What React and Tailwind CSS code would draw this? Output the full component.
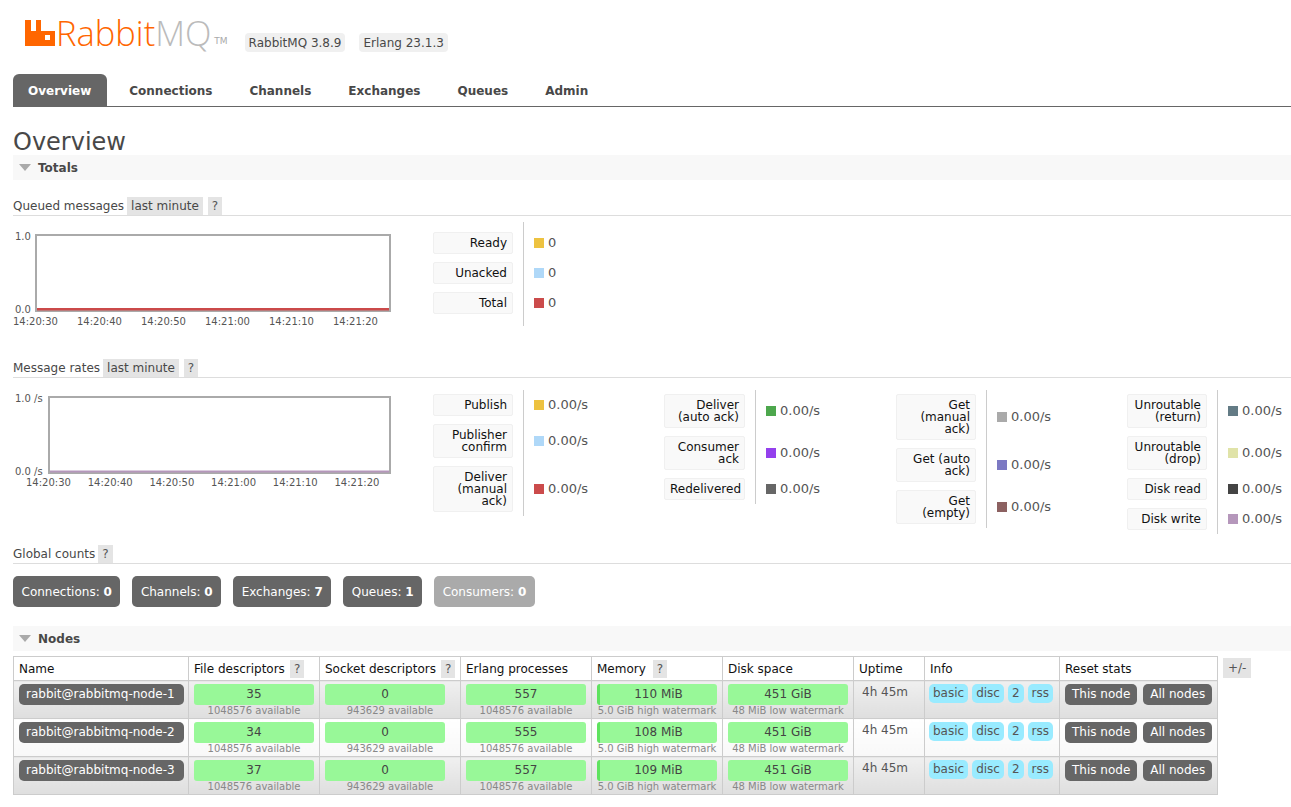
const FONT = '"DejaVu Sans", Verdana, sans-serif'

const nodes = [
  { name: 'rabbit@rabbitmq-node-1', fd: 35, proc: 557, mem: '110 MiB', odd: true },
  { name: 'rabbit@rabbitmq-node-2', fd: 34, proc: 555, mem: '108 MiB', odd: false },
  { name: 'rabbit@rabbitmq-node-3', fd: 37, proc: 557, mem: '109 MiB', odd: true },
]

function Help() {
  return <span className="inline-block h-[18px] bg-[#e4e4e4] px-[4px] leading-[18px] text-[#555]">?</span>
}

function SectionBar({ title }) {
  return (
    <div className="flex h-[25px] items-center bg-[#f8f8f8] pl-[6px]">
      <span className="h-0 w-0 border-x-[6px] border-t-[7px] border-x-transparent border-t-[#aaa]" />
      <span className="ml-[7px] pt-[1px] text-[12px] font-bold text-[#484848]">{title}</span>
    </div>
  )
}

function SubHead({ title, range }) {
  return (
    <div className="flex h-[20px] items-end gap-[5px] border-b border-[#ddd] text-[#484848]">
      <span className="mr-[-2px] leading-[18px]">{title}</span>
      {range && <span className="h-[18px] bg-[#e4e4e4] px-[4px] leading-[18px]">{range}</span>}
      <Help />
    </div>
  )
}

function Chart({ frameX, labels, top, bottom, startX, labelY, step, width, line, lineY, lineH, className }) {
  return (
    <svg width="420" height="104" className={`shrink-0 text-[10px] ${className}`} style={{ fontFamily: FONT }}>
      <rect x={frameX + 1} y="7" width={width} height="76" fill="#fff" stroke="#aaa" strokeWidth="2" />
      <rect x={frameX + 2} y={lineY} width={width - 2} height={lineH} fill={line} />
      <text x="2" y="12" fill="#555">{top}</text>
      <text x="2" y="85" fill="#555">{bottom}</text>
      {labels.map((label, i) => (
        <text key={label} x={startX + i * step} y={labelY} fill="#555">{label}</text>
      ))}
    </svg>
  )
}

function LegendColumn({ rows, width, wide, padTop = 4, padBottom = 4 }) {
  return (
    <div className={`flex shrink-0 ${width}`}>
      <div className={`flex shrink-0 flex-col gap-[8px] border-r border-[#ccc] pr-[10px] ${wide ? 'w-[92px]' : 'w-[91px]'}`} style={{ paddingTop: padTop, paddingBottom: padBottom }}>
        {rows.map((row) => (
          <div key={row.label} className="rounded-[2px] border border-[#f0f0f0] bg-[#f9f9f9] px-[5px] py-[4px] text-right leading-[12px] whitespace-pre-line text-[#111]">
            {row.label}
          </div>
        ))}
      </div>
      <div className="flex flex-col gap-[8px] pl-[10px]" style={{ paddingTop: padTop, paddingBottom: padBottom }}>
        {rows.map((row) => (
          <div key={row.label} className="flex items-center gap-[4px] text-[13px] text-[#555]" style={{ height: 10 + row.label.split('\n').length * 12 }}>
            <span className={`h-[10px] w-[10px] ${row.color}`} />
            <span className="mb-[2px]">{row.value}</span>
          </div>
        ))}
      </div>
    </div>
  )
}

function Count({ label, value, muted }) {
  return (
    <div className={`flex h-[31px] items-center rounded-[5px] px-[8.5px] pt-[2px] text-[#fff] ${muted ? 'bg-[#aaa]' : 'bg-[#666]'}`}>
      {label}:&nbsp;<b>{value}</b>
    </div>
  )
}

function Bar({ value, sub, strip }) {
  return (
    <>
      <div className={`ml-px h-[21px] w-[120px] rounded-[3px] bg-[#98f898] text-center leading-[21px] text-[#444] ${strip ? 'border-l-[3px] border-[#5fe35f]' : ''}`}>{value}</div>
      <div className="text-center text-[10px] leading-[12px] whitespace-nowrap text-[#888]">{sub}</div>
    </>
  )
}

function Th({ children, width }) {
  return <th className={`border border-[#ccc] bg-[#fff] px-[5px] pt-[1px] text-left font-normal text-[#111] ${width}`}>{children}</th>
}

function Td({ children, odd }) {
  return (
    <td className={`border border-[#ccc] px-[4px] pt-[3px] align-top ${odd ? 'bg-gradient-to-b from-[#f0f0f0] to-[#dedede]' : 'bg-gradient-to-b from-[#fff] to-[#f8f8f8]'}`}>
      {children}
    </td>
  )
}

function Tag({ children }) {
  return <span className="h-[19px] rounded-[5px] bg-[#99ebff] px-[4px] leading-[18px] text-[#555]">{children}</span>
}

function Btn({ children }) {
  return <span className="h-[21px] rounded-[5px] bg-[#666] px-[7px] leading-[21px] whitespace-nowrap text-[#fff]">{children}</span>
}

function Logo() {
  return (
    <div className="flex items-start">
      <svg width="30" height="26" viewBox="0 0 30 26" className="mt-[11px]">
        <path fill="#ff6600" fillRule="evenodd" d="M0 0h6v11h5V0h5v11h14v15H0zM20 15v5h5v-5z" />
      </svg>
      <span className="ml-[1px] text-[34.5px] leading-[48px] font-light text-[#ff6600]" style={{ fontFamily: '"Open Sans", sans-serif' }}>
        Rabbit<span className="text-[#bbb]">MQ</span>
      </span>
      <span className="mt-[26px] ml-[3px] text-[9px] leading-[12px] text-[#aaa]">TM</span>
    </div>
  )
}

export default function App() {
  return (
    <div className="h-[807px] overflow-hidden bg-white pl-[13px] text-[12px] leading-[15px]" style={{ fontFamily: FONT }}>
      {/* Header */}
      <div className="flex h-[74px] items-start pl-[12px] pt-[9px]">
        <Logo />
        <div className="mt-[24px] ml-[17px] flex gap-[14px] text-[#484848]">
          <span className="h-[19px] rounded-[4px] bg-[#f0f0f0] px-[4px] leading-[20px]">RabbitMQ 3.8.9</span>
          <span className="h-[19px] rounded-[4px] bg-[#f0f0f0] px-[4px] leading-[20px]">Erlang 23.1.3</span>
        </div>
      </div>

      {/* Tabs */}
      <div className="flex h-[33px] gap-[7px] border-b border-[#666] text-[12px] font-bold text-[#484848]">
        {['Overview', 'Connections', 'Channels', 'Exchanges', 'Queues', 'Admin'].map((tab, i) => (
          <span key={tab} className={`h-[32px] rounded-t-[6px] leading-[34px] ${i === 0 ? 'bg-[#666] pr-[16px] pl-[15px] text-white' : 'px-[15px]'}`}>{tab}</span>
        ))}
      </div>

      <h1 className="mt-[21px] h-[27px] text-[24px] leading-[29px] font-normal text-[#484848]">Overview</h1>

      <SectionBar title="Totals" />

      <div className="mt-[16px]"><SubHead title="Queued messages" range="last minute" /></div>

      <div className="mt-[6px] flex h-[104px]">
        <Chart frameX={22} top="1.0" bottom="0.0" startX={0} labelY={97} step={64} width={354} line="#cb4a4a" lineY={80} lineH={2.5} className="mt-[6px]"
          labels={['14:20:30', '14:20:40', '14:20:50', '14:21:00', '14:21:10', '14:21:20']} />
        <LegendColumn width="w-[231px]" padTop={10} rows={[
          { label: 'Ready', value: '0', color: 'bg-[#edc240]' },
          { label: 'Unacked', value: '0', color: 'bg-[#afd8f8]' },
          { label: 'Total', value: '0', color: 'bg-[#cb4b4b]' },
        ]} />
      </div>

      <div className="mt-[32px]"><SubHead title="Message rates" range="last minute" /></div>

      <div className="mt-[12px] flex">
        <Chart frameX={35} top="1.0 /s" bottom="0.0 /s" startX={13} labelY={96} step={61.7} width={341} line="#b597bb" lineY={80.5} lineH={2} className=""
          labels={['14:20:30', '14:20:40', '14:20:50', '14:21:00', '14:21:10', '14:21:20']} />
        <div className="flex items-start">
          <LegendColumn width="w-[231px]" rows={[
            { label: 'Publish', value: '0.00/s', color: 'bg-[#edc240]' },
            { label: 'Publisher\nconfirm', value: '0.00/s', color: 'bg-[#afd8f8]' },
            { label: 'Deliver\n(manual\nack)', value: '0.00/s', color: 'bg-[#cb4b4b]' },
          ]} />
          <LegendColumn width="w-[232px]" wide rows={[
            { label: 'Deliver\n(auto ack)', value: '0.00/s', color: 'bg-[#4da74d]' },
            { label: 'Consumer\nack', value: '0.00/s', color: 'bg-[#9440ed]' },
            { label: 'Redelivered', value: '0.00/s', color: 'bg-[#666]' },
          ]} />
          <LegendColumn width="w-[231px]" rows={[
            { label: 'Get\n(manual\nack)', value: '0.00/s', color: 'bg-[#aaa]' },
            { label: 'Get (auto\nack)', value: '0.00/s', color: 'bg-[#7c79c3]' },
            { label: 'Get\n(empty)', value: '0.00/s', color: 'bg-[#8c6161]' },
          ]} />
          <LegendColumn width="w-[164px]" rows={[
            { label: 'Unroutable\n(return)', value: '0.00/s', color: 'bg-[#637b85]' },
            { label: 'Unroutable\n(drop)', value: '0.00/s', color: 'bg-[#e0e3a8]' },
            { label: 'Disk read', value: '0.00/s', color: 'bg-[#444]' },
            { label: 'Disk write', value: '0.00/s', color: 'bg-[#b597bb]' },
          ]} />
        </div>
      </div>

      <div className="mt-[10px]"><SubHead title="Global counts" /></div>

      <div className="mt-[12px] flex gap-[12px]">
        <Count label="Connections" value="0" />
        <Count label="Channels" value="0" />
        <Count label="Exchanges" value="7" />
        <Count label="Queues" value="1" />
        <Count label="Consumers" value="0" muted />
      </div>

      <div className="mt-[19px]"><SectionBar title="Nodes" /></div>

      {/* Nodes table */}
      <div className="mt-[5px] flex items-start">
        <table className="w-[1204px] table-fixed border-collapse">
          <thead>
            <tr className="h-[24px]">
              <Th width="w-[175px]">Name</Th>
              <Th width="w-[131px]"><span className="flex items-center gap-[5px]">File descriptors <Help /></span></Th>
              <Th width="w-[141px]"><span className="flex items-center gap-[5px] whitespace-nowrap">Socket descriptors <Help /></span></Th>
              <Th width="w-[131px]">Erlang processes</Th>
              <Th width="w-[131px]"><span className="flex items-center gap-[7px]">Memory <Help /></span></Th>
              <Th width="w-[131px]">Disk space</Th>
              <Th width="w-[71px]">Uptime</Th>
              <Th width="w-[135px]">Info</Th>
              <Th width="w-[158px]">Reset stats</Th>
            </tr>
          </thead>
          <tbody>
            {nodes.map((node) => (
              <tr key={node.name} className="h-[38px]">
                <Td odd={node.odd}>
                  <span className="ml-[1px] block h-[21px] rounded-[5px] bg-[#666] px-[7px] leading-[21px] whitespace-nowrap text-white">{node.name}</span>
                </Td>
                <Td odd={node.odd}><Bar value={node.fd} sub="1048576 available" /></Td>
                <Td odd={node.odd}><Bar value="0" sub="943629 available" /></Td>
                <Td odd={node.odd}><Bar value={node.proc} sub="1048576 available" /></Td>
                <Td odd={node.odd}><Bar value={node.mem} sub="5.0 GiB high watermark" strip /></Td>
                <Td odd={node.odd}><Bar value="451 GiB" sub="48 MiB low watermark" /></Td>
                <Td odd={node.odd}><div className="pt-[1px] pl-[4px] text-[#555]">4h 45m</div></Td>
                <Td odd={node.odd}>
                  <div className="flex gap-[4px]">
                    <Tag>basic</Tag><Tag>disc</Tag><Tag>2</Tag><Tag>rss</Tag>
                  </div>
                </Td>
                <Td odd={node.odd}>
                  <div className="ml-[1px] flex gap-[6px]">
                    <Btn>This node</Btn><Btn>All nodes</Btn>
                  </div>
                </Td>
              </tr>
            ))}
          </tbody>
        </table>
        <span className="mt-[2px] ml-[5px] h-[20px] bg-[#e4e4e4] px-[5px] leading-[20px] text-[#555]">+/-</span>
      </div>
    </div>
  )
}
